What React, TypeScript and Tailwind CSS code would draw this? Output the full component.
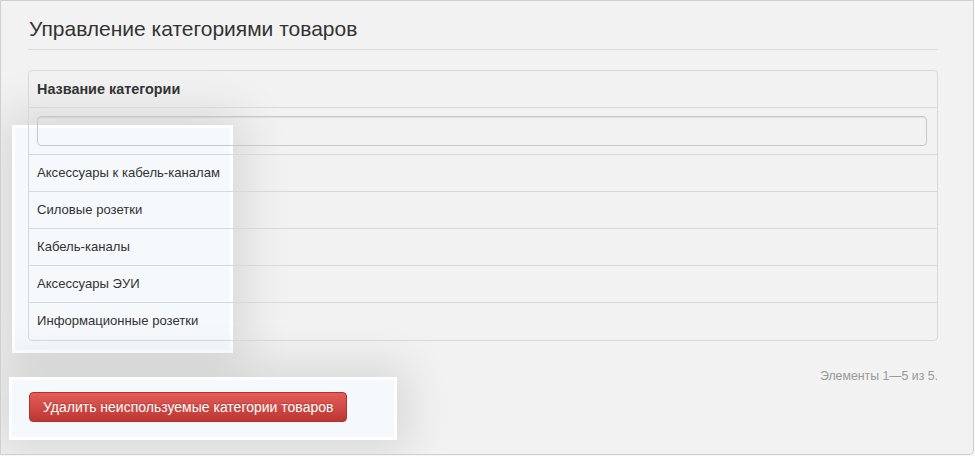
import React from "react";

const rows = [
  "Аксессуары к кабель-каналам",
  "Силовые розетки",
  "Кабель-каналы",
  "Аксессуары ЭУИ",
  "Информационные розетки",
];

export default function App() {
  return (
    <div className="w-[975px] h-[456px] bg-[#f7f7f7] overflow-hidden font-['Liberation_Sans',Arial,sans-serif] text-[#333]">
      <div className="relative w-[974px] h-[455px] border border-[#cfcfcf] rounded-br-[5px] bg-[#f2f2f2] overflow-hidden">
        {/* highlight overlays (behind content) */}
        <div className="absolute z-0 left-[11px] top-[124px] w-[221px] h-[228px] border-[3px] border-white bg-[#f5f9fc] shadow-[0_0_45px_12px_rgba(0,0,0,0.11)]" />
        <div className="absolute z-0 left-[8px] top-[376px] w-[388px] h-[63px] border-[3px] border-white bg-[#f5f9fc] shadow-[0_0_45px_12px_rgba(0,0,0,0.11)]" />

        <div className="relative z-10 pl-[27px] pr-[35px] pt-[15px]">
          <h1 className="text-[21px] leading-[26px] font-normal text-[#333] pb-[7px] border-b border-[#dcdcdc] pl-[1px]">
            Управление категориями товаров
          </h1>

          <div className="mt-[20px] border border-[#d8d8d8] rounded-[4px]">
            <div className="px-[8px] py-[8px] h-[37px] border-b border-[#d8d8d8] text-[14.4px] leading-[20px] font-bold text-[#333]">
              Название категории
            </div>
            <div className="px-[8px] pt-[8px] pb-[8px] border-b border-[#d8d8d8]">
              <div className="h-[30px] mr-[2px] rounded-[4px] border border-[#c8c8c8] shadow-[inset_0_1px_1px_rgba(0,0,0,0.075)]" />
            </div>
            {rows.map((r, i) => (
              <div
                key={r}
                className={`px-[8px] py-[8px] h-[37px] text-[13.1px] leading-[20px] text-[#333] ${
                  i < rows.length - 1 ? "border-b border-[#d8d8d8]" : "h-[36px]"
                }`}
              >
                {r}
              </div>
            ))}
          </div>

          <div className="mt-[26px] text-right text-[12.3px] leading-[18px] text-[#999]">
            Элементы 1—5 из 5.
          </div>

          <div className="mt-[7px] pl-[1px]">
            <button className="h-[30px] px-[13px] rounded-[4px] border border-[#b3322e] bg-linear-to-b from-[#e35d59] to-[#bd3631] text-white text-[14px] leading-[20px] [text-shadow:0_-1px_0_rgba(0,0,0,0.2)]">
              Удалить неиспользуемые категории товаров
            </button>
          </div>
        </div>
      </div>
    </div>
  );
}
